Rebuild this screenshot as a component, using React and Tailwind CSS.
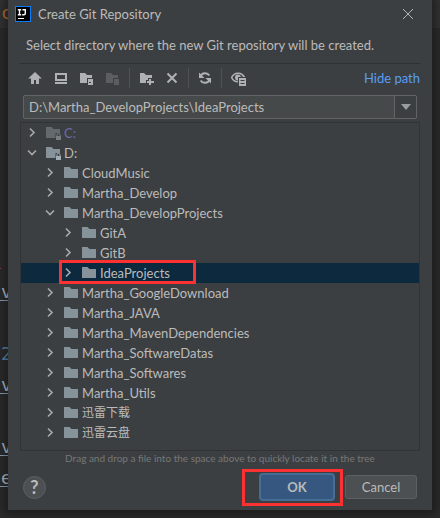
import React from "react";

const FONT = "font-['Lato','Noto_Sans_CJK_SC',sans-serif]";

const EDITOR_GLYPHS = [
  { char: "c", place: "top-[3px] text-[#b86b2b]", line: false },
  { char: "v", place: "top-[282px] text-[#a9b7c6]", line: true },
  { char: "2", place: "top-[344px] text-[#5684a8]", line: false },
  { char: "v", place: "top-[375px] text-[#a9b7c6]", line: true },
  { char: "v", place: "top-[437px] text-[#a9b7c6]", line: true },
  { char: "e", place: "top-[468px] text-[#a9b7c6]", line: true },
];

function EditorBackdrop() {
  return (
    <div className="absolute inset-0 overflow-hidden bg-[#2b2b2b] font-['DejaVu_Sans_Mono',monospace] text-[18px] leading-5">
      <div className="h-7 bg-[#323232]" />
      {EDITOR_GLYPHS.map((g, i) => (
        <span key={i} className={`absolute left-0 h-[19px] w-3 pl-px ${g.place} ${g.line ? "border-b border-[#8a9bb5]" : ""}`}>
          {g.char}
        </span>
      ))}
      <span className="absolute left-0 top-[268px] h-px w-px bg-[#a03c3c]" />
    </div>
  );
}

function Logo() {
  return (
    <svg width="16" height="16" viewBox="0 0 16 16" aria-hidden="true">
      <rect width="16" height="16" fill="#087cfa" />
      <rect x="1" y="1" width="14" height="14" fill="#000" />
      <path d="M2.800 3.700h3.400M4.500 3.700v5M2.800 8.700h3.400M7.500 3.700h3M10.300 3v4.200q0 1.500-1.400 1.500H7.200" fill="none" stroke="#fff" strokeWidth="1.400" />
      <path d="M3 12h6v1H3z" fill="#fff" />
    </svg>
  );
}

function Icon({ children, dim }) {
  return (
    <svg width="16" height="16" viewBox="0 0 16 16" fill="currentColor" className={dim ? "text-[#5b5d5f]" : "text-[#afb1b3]"} aria-hidden="true">
      {children}
    </svg>
  );
}

function ToolButton({ label, children, dim }) {
  return (
    <button type="button" aria-label={label} disabled={dim} className="flex size-4 items-center justify-center">
      <Icon dim={dim}>{children}</Icon>
    </button>
  );
}

function Divider() {
  return <span className="h-5 w-px bg-[#515151]" />;
}

function Toolbar() {
  return (
    <div className="flex h-7 items-center pl-[7px]">
      <div className="flex gap-[10px]">
        <ToolButton label="Home">
          <path d="M8 2 1.200 8.600H4V14h3v-4h2v4h3V8.600h2.800z" />
        </ToolButton>
        <ToolButton label="Desktop">
          <path fillRule="evenodd" d="M2 3h12v8H2zm2 2v4h8V5zM2 12h12v2H2z" />
        </ToolButton>
        <ToolButton label="Project directory">
          <path d="M1 3h5l2 2h5v3H8v5H1z" />
          <path fillRule="evenodd" d="M9 9h5v6H9zm1 3v1h2v-1z" />
        </ToolButton>
        <ToolButton label="Module directory" dim>
          <path d="M1 3h5l2 2h5v3H8v5H1z" />
          <path d="M9 9h5v6H9z" />
        </ToolButton>
      </div>
      <div className="flex items-center gap-2 pl-2">
        <Divider />
        <div className="flex gap-[10px]">
          <ToolButton label="New folder">
            <path d="M2 3h4l2 2h6v3h-4v2H8v3H2z" />
            <path d="M11 9h2v2h3v2h-3v2h-2v-2H9v-2h2z" />
          </ToolButton>
          <ToolButton label="Delete">
            <path d="m3.500 3.500 9 9m0-9-9 9" stroke="currentColor" strokeWidth="2" />
          </ToolButton>
        </div>
        <Divider />
        <ToolButton label="Refresh">
          <path d="M3.200 7A5 5 0 0 1 12.300 5.500M12.800 9A5 5 0 0 1 3.700 10.500" fill="none" stroke="currentColor" strokeWidth="2" />
          <path d="M2 2.500V8h5.500zM14 13.500V8H8.500z" />
        </ToolButton>
        <Divider />
        <ToolButton label="Show hidden files">
          <path d="M8 12.500C4.500 12.500 2 10.500 .8 7.500 2 4.500 4.500 2.500 8 2.500s6 2 7.200 4.500H13C12 5.200 10.500 4 8 4 5.500 4 3.500 5.200 2.500 7.500 3.500 9.800 5 11 8 11z" />
          <path fillRule="evenodd" d="M8 4.500a3 3 0 0 1 3 2.500H8v3.500a3 3 0 0 1 0-6z" />
          <path fillRule="evenodd" d="M9 8h7v8H9zm1.500 2v1h4v-1zm0 3v1h4v-1z" />
        </ToolButton>
      </div>
      <a href="#path" className="ml-auto text-[#589df6]">
        Hide path
      </a>
    </div>
  );
}

function Chevron({ open }) {
  return (
    <svg width="16" height="16" viewBox="0 0 16 16" fill="none" stroke="#a7a9ab" strokeWidth="1.600" aria-hidden="true">
      <path d={open ? "m4 5.500 4 4 4-4" : "m6 3.500 4 4-4 4"} />
    </svg>
  );
}

function FolderIcon({ drive, dim }) {
  return (
    <svg width="16" height="16" viewBox="0 0 16 16" fill={dim ? "#63696d" : "#87939a"} aria-hidden="true">
      <path d="M1 2h5.500l2 2H15v9H1z" />
      {drive && (
        <>
          <path d="M10.500 8H16v8h-5.500z" fill="#3c3f41" />
          <path d="M11 11h5v4h-5z" fill={dim ? "#777d81" : "#9fadb7"} />
          <path d="M12 11V9.500q0-1 1.500-1t1.500 1V11" fill="none" stroke={dim ? "#777d81" : "#9fadb7"} />
        </>
      )}
    </svg>
  );
}

const INDENT = ["pl-[3px]", "pl-[21px]", "pl-[39px]"];

const ROWS = [
  { name: "C:", level: 0, drive: true, dim: true },
  { name: "D:", level: 0, drive: true, open: true },
  { name: "CloudMusic", level: 1 },
  { name: "Martha_Develop", level: 1 },
  { name: "Martha_DevelopProjects", level: 1, open: true },
  { name: "GitA", level: 2 },
  { name: "GitB", level: 2 },
  { name: "IdeaProjects", level: 2, selected: true },
  { name: "Martha_GoogleDownload", level: 1 },
  { name: "Martha_JAVA", level: 1 },
  { name: "Martha_MavenDependencies", level: 1 },
  { name: "Martha_SoftwareDatas", level: 1 },
  { name: "Martha_Softwares", level: 1 },
  { name: "Martha_Utils", level: 1 },
  { name: "迅雷下载", level: 1, cjk: true },
  { name: "迅雷云盘", level: 1, cjk: true },
];

function TreeRow({ row }) {
  return (
    <li
      role="treeitem"
      aria-level={row.level + 1}
      aria-selected={Boolean(row.selected)}
      className={`relative flex h-5 items-center ${INDENT[row.level]} ${row.selected ? "bg-[#0d293e]" : ""}`}
    >
      <Chevron open={row.open} />
      <span className="ml-[5px] flex items-center gap-[3px]">
        <FolderIcon drive={row.drive} dim={row.dim} />
        <span className={`${row.dim ? "text-[#6c6ca6]" : ""} ${row.cjk ? "text-[12px]" : ""}`}>{row.name}</span>
      </span>
      {row.selected && <span className="absolute -top-[3px] left-[38px] h-6 w-[137px] border-3 border-[#fc3232]" />}
    </li>
  );
}

export default function App() {
  return (
    <div className={`relative min-h-screen px-2 pb-2 text-[13px] leading-5 text-[#bbbbbb] ${FONT}`}>
      <EditorBackdrop />
      <main className="relative bg-[#3c3f41] pb-[9px] shadow-[0_0_8px_4px_rgba(0,0,0,0.35)]">
        <header className="flex h-7 items-center gap-[7px] pl-[7px] pr-[18px]">
          <Logo />
          <h1>Create Git Repository</h1>
          <button type="button" aria-label="Close" className="ml-auto">
            <svg width="12" height="12" viewBox="0 0 12 12" stroke="#b4b6b7" aria-hidden="true">
              <path d="m1 1 10 10M11 1 1 11" />
            </svg>
          </button>
        </header>
        <p className="pb-2 pl-[18px] pt-[7px]">Select directory where the new Git repository will be created.</p>
        <section className="mx-3 border-t border-[#2f3133]">
          <Toolbar />
          <div className="mx-[3px] mt-[3px] flex h-6 rounded-[2px] border border-[#646464] bg-[#45494a]">
            <input
              type="text"
              aria-label="Directory path"
              defaultValue="D:\Martha_DevelopProjects\IdeaProjects"
              className="min-w-0 flex-1 px-[5px] outline-none"
            />
            <button type="button" aria-label="Recent paths" className="flex w-[22px] items-center justify-center border-l border-[#646464] bg-[#3c3f41]">
              <svg width="10" height="6" viewBox="0 0 10 6" fill="#9a9da0" aria-hidden="true">
                <path d="M0 0h10L5 6z" />
              </svg>
            </button>
          </div>
          <ul role="tree" aria-label="Directories" className="mt-[3px] border border-[#313335] pb-[7px]">
            {ROWS.map((row) => (
              <TreeRow key={row.name} row={row} />
            ))}
          </ul>
        </section>
        <p className="text-center text-[10px] leading-[14px] text-[#777777]">Drag and drop a file into the space above to quickly locate it in the tree</p>
        <footer className="mt-2 flex items-center gap-[10px] px-[15px]">
          <button type="button" aria-label="Help" className="mr-auto flex size-[23px] items-center justify-center rounded-full border border-[#5e6060] bg-[#4c5052] text-[18px] font-bold">
            ?
          </button>
          <div className="relative flex">
            <button type="button" className="h-7 w-[76px] rounded-[4px] border-2 border-[#466d94] bg-[#365880] font-bold">
              OK
            </button>
            <span className="absolute -left-[17px] -top-1 h-[37px] w-[101px] border-3 border-[#fc3232]" />
          </div>
          <button type="button" className="h-6 w-[72px] rounded-[3px] border border-[#5e6060] bg-[#4c5052]">
            Cancel
          </button>
        </footer>
      </main>
    </div>
  );
}
